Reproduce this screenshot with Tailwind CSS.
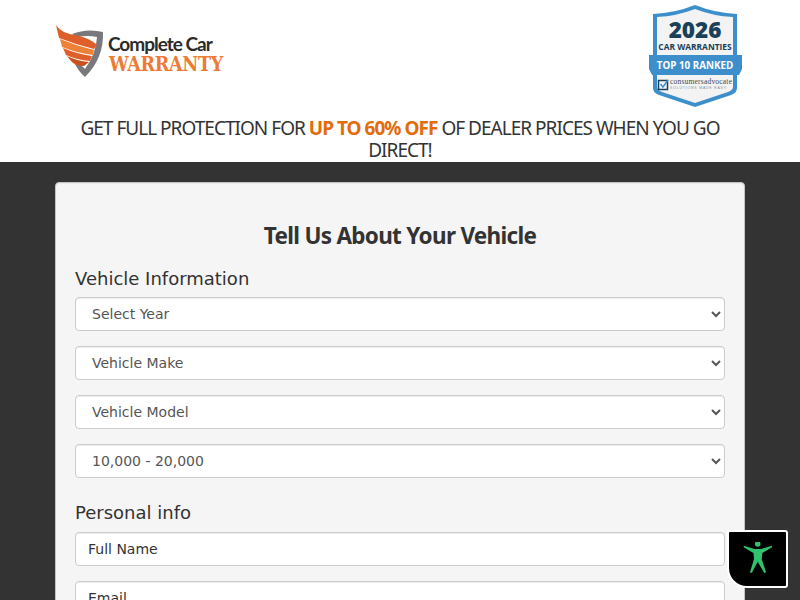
<!DOCTYPE html>
<html lang="en">
<head>
  <meta charset="UTF-8">
  <title>Complete Car Warranty</title>
  <script src="https://cdn.jsdelivr.net/npm/@tailwindcss/browser@4"></script>
</head>
<body class="bg-[#333333] font-['DejaVu_Sans',sans-serif] text-[#333333] h-[600px] overflow-hidden">
  <!-- Header -->
  <header class="bg-white h-[162px] flex flex-col">
    <div class="h-[112px] pl-[55px] pr-[58px] flex justify-between items-start">
      <!-- Logo -->
      <div class="flex items-start pt-[24px]">
        <svg width="52" height="54" viewBox="0 0 52 54">
          <path d="M17 10 Q32 4 48 8 Q49 34 30 53 Q24 48 20 40 L25 40 Q28 43 30 45 Q41 30 42 13 Q32 11 22 13 Z" fill="#77797c"/>
          <path d="M1 1 Q6 9 20 11 Q35 14 42 21 L39 25 Q22 21 4 14 Z" fill="#df5f2a"/>
          <path d="M5 15 Q22 22 39 26 L38 31 Q22 29 7 23 Z" fill="#ec8238"/>
          <path d="M8 24 Q22 30 37 32 L35 37 Q22 36 11 31 Z" fill="#df5f2a"/>
          <path d="M12 32 Q22 37 34 38 L29 42 Q20 42 16 37 Z" fill="#c9501f"/>
        </svg>
        <div class="ml-[1px] mt-[10px] flex flex-col">
          <span class="font-['Lato',sans-serif] font-bold text-[19px] leading-[20px] tracking-[-1px] text-[#2b2b2b]">Complete Car</span>
          <span class="mt-[2px] font-['DejaVu_Serif',serif] [font-stretch:condensed] font-bold text-[19.5px] leading-[17px] tracking-[-0.3px] text-[#ee7b35] pl-[1px]">WARRANTY</span>
        </div>
      </div>
      <!-- Badge -->
      <svg class="mt-[4px]" width="93" height="104" viewBox="0 0 93 104">
        <path d="M4 10 Q26 9 46 1 Q66 9 88 10 L88 84 Q88 89 82 91 L46 103 L10 91 Q4 89 4 84 Z" fill="#3d8fcb"/>
        <path d="M8 13 Q28 12 46 5 Q64 12 84 13 L84 83 Q84 86 79 88 L46 99 L13 88 Q8 86 8 83 Z" fill="#f3f3f3"/>
        <text x="46" y="34" text-anchor="middle" font-family="Open Sans" font-weight="800" font-size="22.500" fill="#1b4159">2026</text>
        <text x="46" y="46" text-anchor="middle" font-family="Open Sans" font-weight="700" font-size="8.400" fill="#1b4159">CAR WARRANTIES</text>
        <path d="M0 51 L93 51 L93 65 L90 71 L3 71 L0 65 Z" fill="#3d8fcb"/>
        <text x="46" y="65" text-anchor="middle" font-family="Open Sans" font-weight="700" font-size="9.800" fill="#ffffff">TOP 10 RANKED</text>
        <rect x="9.500" y="76.500" width="9" height="9" fill="none" stroke="#1b4159" stroke-width="1.500"/>
        <path d="M11.500 80 L14 83 L19 76" fill="none" stroke="#3d8fcb" stroke-width="1.500"/>
        <text x="21" y="80" font-family="Liberation Serif" font-size="7.500" textLength="62" fill="#3b4a55">consumersadvocate</text>
        <text x="21" y="85" font-family="Liberation Sans" font-size="3.500" textLength="56" fill="#8a8f93">SOLUTIONS MADE EASY</text>
      </svg>
    </div>
    <h2 class="px-[60px] pt-[5px] text-center font-['Noto_Sans',sans-serif] text-[19px] leading-[22px] tracking-[-0.98px] text-[#333333]">
      GET FULL PROTECTION FOR <strong class="text-[#e36c0a] font-bold">UP TO 60% OFF</strong> OF DEALER PRICES WHEN YOU GO DIRECT!
    </h2>
  </header>

  <!-- Form panel -->
  <main class="mx-[55px] mt-[20px] bg-[#f5f5f5] border border-[#c4c4c4] rounded-[4px] px-[19px] pt-[36px] shadow-[inset_0_1px_1px_rgba(0,0,0,0.05)]">
    <h1 class="text-center font-['Noto_Sans',sans-serif] font-bold text-[22.5px] leading-[33px] tracking-[-0.7px] text-[#333333]">Tell Us About Your Vehicle</h1>
    <h4 class="mt-[17px] text-[18px] leading-[20px] text-[#333333]">Vehicle Information</h4>
    <div class="mt-[8px] flex flex-col gap-[15px]">
      <select class="w-full h-[34px] px-[12px] bg-white border border-[#cccccc] rounded-[4px] text-[14px] text-[#555555] shadow-[inset_0_1px_1px_rgba(0,0,0,0.075)]"><option>Select Year</option></select>
      <select class="w-full h-[34px] px-[12px] bg-white border border-[#cccccc] rounded-[4px] text-[14px] text-[#555555] shadow-[inset_0_1px_1px_rgba(0,0,0,0.075)]"><option>Vehicle Make</option></select>
      <select class="w-full h-[34px] px-[12px] bg-white border border-[#cccccc] rounded-[4px] text-[14px] text-[#555555] shadow-[inset_0_1px_1px_rgba(0,0,0,0.075)]"><option>Vehicle Model</option></select>
      <select class="w-full h-[34px] px-[12px] bg-white border border-[#cccccc] rounded-[4px] text-[14px] text-[#555555] shadow-[inset_0_1px_1px_rgba(0,0,0,0.075)]"><option>10,000 - 20,000</option></select>
    </div>
    <h4 class="mt-[25px] text-[18px] leading-[20px] text-[#333333]">Personal info</h4>
    <div class="mt-[9px] flex flex-col gap-[15px]">
      <input type="text" placeholder="Full Name" class="w-full h-[34px] px-[12px] bg-white border border-[#cccccc] rounded-[4px] text-[14px] placeholder:text-[#333333] shadow-[inset_0_1px_1px_rgba(0,0,0,0.075)]">
      <input type="text" placeholder="Email" class="w-full h-[34px] px-[12px] bg-white border border-[#cccccc] rounded-[4px] text-[14px] placeholder:text-[#333333] shadow-[inset_0_1px_1px_rgba(0,0,0,0.075)]">
    </div>
  </main>

  <!-- Accessibility widget -->
  <button aria-label="Accessibility" class="fixed left-[727px] top-[530px] w-[61px] h-[58px] bg-black border-2 border-white rounded-tl-[3px] rounded-tr-[3px] rounded-br-[3px] rounded-bl-[20px] flex items-center justify-center">
    <svg width="30" height="34" viewBox="0 2 30 34">
      <circle cx="14.700" cy="4" r="2.800" fill="#2fc26f"/>
      <path d="M0.700 5.700 L11.500 9 L18 9 L29 5.700 L29 7.300 L19.300 13 L18.700 19 L23 32.300 L21.300 33 L14.700 21.700 L8.700 33 L7 32.300 L11 19 L10.500 13 L0.700 7.300 Z" fill="#2fc26f"/>
    </svg>
  </button>
</body>
</html>
